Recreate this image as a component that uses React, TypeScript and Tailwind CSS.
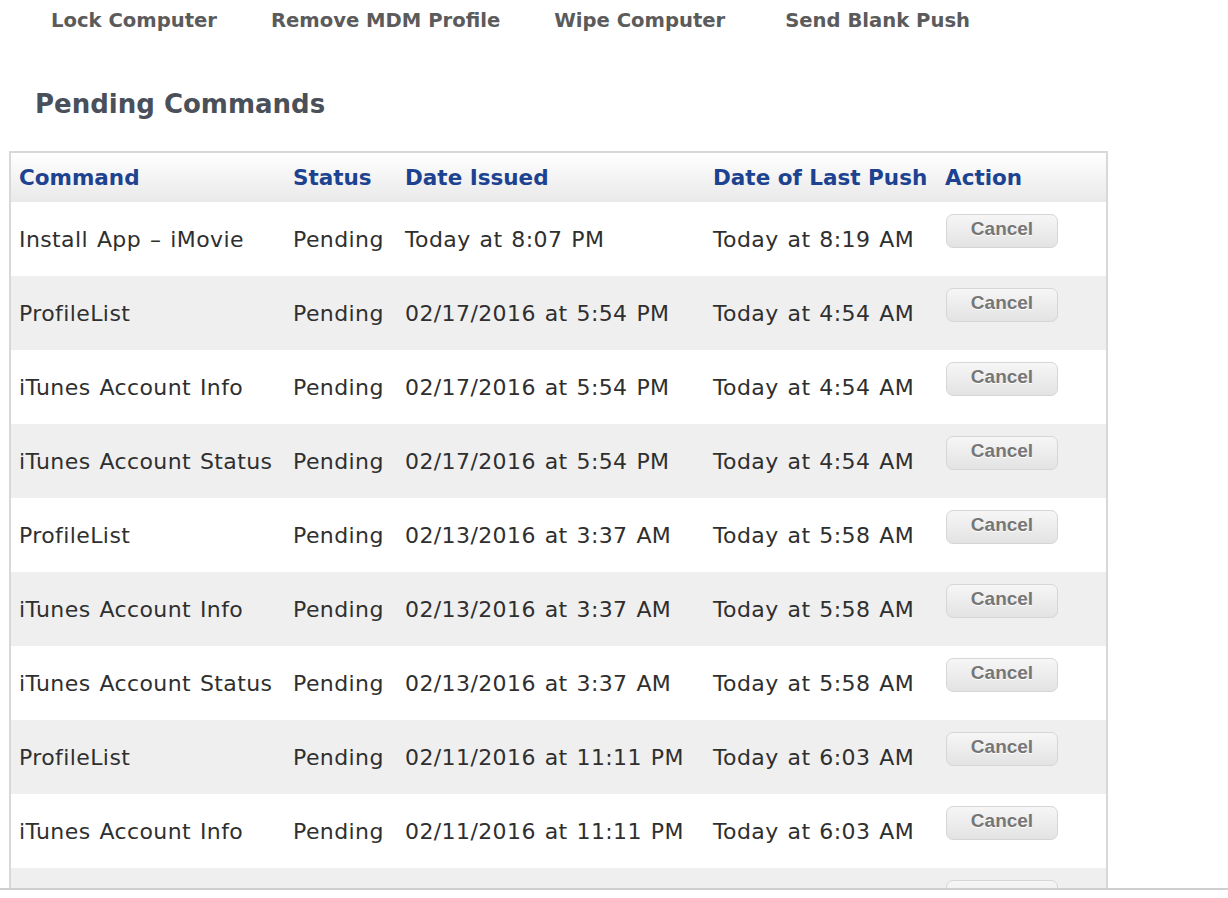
const actions = ['Lock Computer', 'Remove MDM Profile', 'Wipe Computer', 'Send Blank Push']

const commands = [
  { name: 'Install App – iMovie', status: 'Pending', issued: 'Today at 8:07 PM', push: 'Today at 8:19 AM' },
  { name: 'ProfileList', status: 'Pending', issued: '02/17/2016 at 5:54 PM', push: 'Today at 4:54 AM' },
  { name: 'iTunes Account Info', status: 'Pending', issued: '02/17/2016 at 5:54 PM', push: 'Today at 4:54 AM' },
  { name: 'iTunes Account Status', status: 'Pending', issued: '02/17/2016 at 5:54 PM', push: 'Today at 4:54 AM' },
  { name: 'ProfileList', status: 'Pending', issued: '02/13/2016 at 3:37 AM', push: 'Today at 5:58 AM' },
  { name: 'iTunes Account Info', status: 'Pending', issued: '02/13/2016 at 3:37 AM', push: 'Today at 5:58 AM' },
  { name: 'iTunes Account Status', status: 'Pending', issued: '02/13/2016 at 3:37 AM', push: 'Today at 5:58 AM' },
  { name: 'ProfileList', status: 'Pending', issued: '02/11/2016 at 11:11 PM', push: 'Today at 6:03 AM' },
  { name: 'iTunes Account Info', status: 'Pending', issued: '02/11/2016 at 11:11 PM', push: 'Today at 6:03 AM' },
  { name: 'iTunes Account Status', status: 'Pending', issued: '02/11/2016 at 11:11 PM', push: 'Today at 6:03 AM' },
]

export default function App() {
  return (
    <div className="bg-white w-[1228px] h-[898px] font-['DejaVu_Sans',sans-serif]">
      <div className="h-[888px] overflow-hidden">
        {/* Computer actions */}
        <div className="flex gap-[54px] pl-[51px] pt-[9px]">
          {actions.map(a => (
            <a key={a} className="text-[19.6px] leading-[24px] font-bold text-[#5b5b5b] cursor-pointer last:ml-[6px]">
              {a}
            </a>
          ))}
        </div>

        <h2 className="mt-[55px] pl-[35px] text-[26px] leading-[32px] font-bold text-[#4a505a]">
          Pending Commands
        </h2>

        {/* Pending commands table */}
        <div className="mt-[31px] ml-[9px] w-[1099px] border-2 border-b-0 border-[#d8d8d8]">
          <table className="w-full table-fixed border-collapse">
            <colgroup>
              <col className="w-[274px]" />
              <col className="w-[112px]" />
              <col className="w-[308px]" />
              <col className="w-[232px]" />
              <col />
            </colgroup>
            <thead>
              <tr className="h-[49px] bg-gradient-to-b from-white to-[#e9e9e9]">
                {['Command', 'Status', 'Date Issued', 'Date of Last Push', 'Action'].map(h => (
                  <th key={h} className="pl-[8px] pt-[2px] text-left text-[21.5px] font-bold text-[#1d4290] whitespace-nowrap">
                    {h}
                  </th>
                ))}
              </tr>
            </thead>
            <tbody>
              {commands.map((c, i) => (
                <tr
                  key={i}
                  className={`h-[74px] text-[22px] tracking-[0.4px] [word-spacing:1.5px] text-[#2f2f2f] ${i % 2 === 1 ? 'bg-[#efefef]' : 'bg-white'}`}
                >
                  <td className="pl-[8px] whitespace-nowrap">{c.name}</td>
                  <td className="pl-[8px] whitespace-nowrap">{c.status}</td>
                  <td className="pl-[8px] whitespace-nowrap">{c.issued}</td>
                  <td className="pl-[8px] whitespace-nowrap">{c.push}</td>
                  <td className="pl-[9px] pt-[9px] align-top">
                    <button className="w-[112px] h-[34px] rounded-[7px] border border-[#d6d6d6] bg-gradient-to-b from-[#f6f6f6] to-[#e3e3e3] pb-[5px] text-[19px] tracking-normal [word-spacing:normal] font-bold text-[#767676] [text-shadow:0_1px_0_#fff] font-['Liberation_Sans',sans-serif]">
                      Cancel
                    </button>
                  </td>
                </tr>
              ))}
            </tbody>
          </table>
        </div>
      </div>
      <div className="h-[2px] bg-[#cfcfcf]" />
    </div>
  )
}
